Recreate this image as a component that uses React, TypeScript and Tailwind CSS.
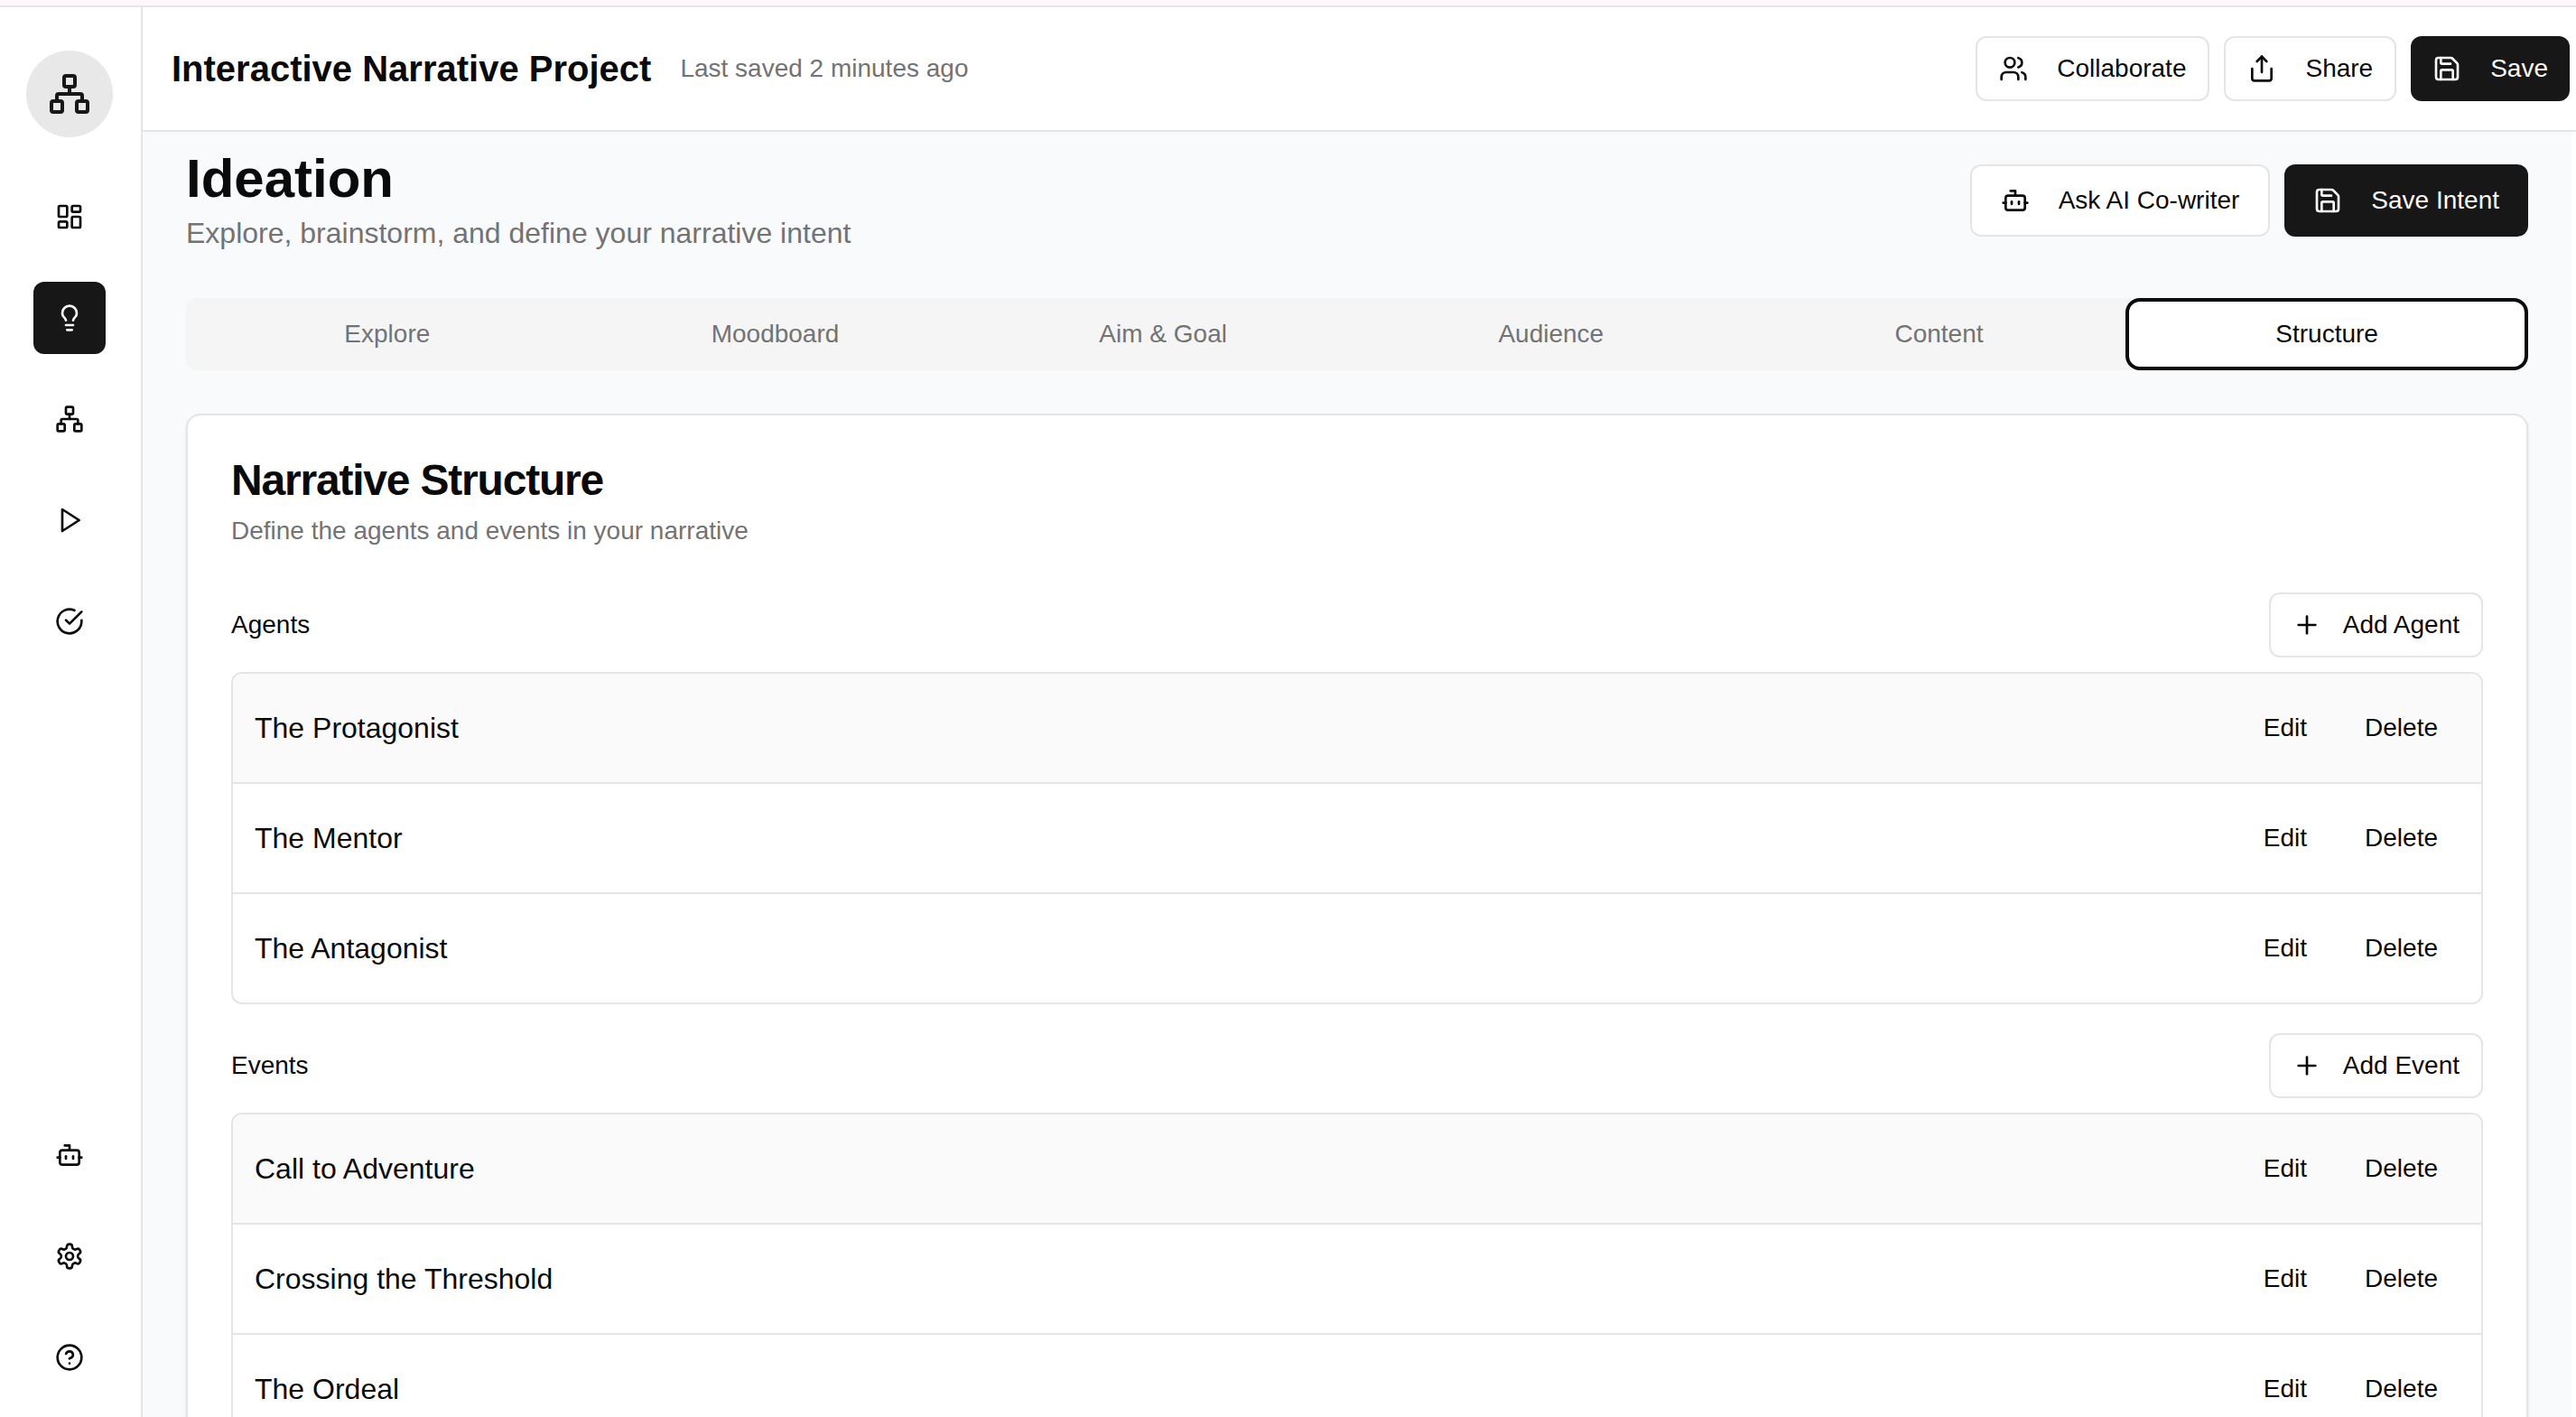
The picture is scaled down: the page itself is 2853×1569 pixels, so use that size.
import { ComponentType, ReactNode, useState } from "react";
import {
  Bot,
  CircleQuestionMark,
  LayoutDashboard,
  Lightbulb,
  Network,
  Plus,
  Save,
  Share,
  Users,
} from "lucide-react";

type IconType = ComponentType<{ className?: string }>;
type NavItem = { label: string; icon: IconType };

function StrokeIcon({ className, children }: { className?: string; children: ReactNode }) {
  return (
    <svg
      viewBox="0 0 24 24"
      fill="none"
      stroke="currentColor"
      strokeWidth="2"
      strokeLinecap="round"
      strokeLinejoin="round"
      aria-hidden="true"
      className={className}
    >
      {children}
    </svg>
  );
}

function PlayIcon({ className }: { className?: string }) {
  return (
    <StrokeIcon className={className}>
      <polygon points="6 3 20 12 6 21 6 3" />
    </StrokeIcon>
  );
}

function CheckIcon({ className }: { className?: string }) {
  return (
    <StrokeIcon className={className}>
      <path d="M22 11.08V12a10 10 0 1 1-5.93-9.14" />
      <path d="m9 11 3 3L22 4" />
    </StrokeIcon>
  );
}

function GearIcon({ className }: { className?: string }) {
  return (
    <StrokeIcon className={className}>
      <path d="M12.22 2h-.44a2 2 0 0 0-2 2v.18a2 2 0 0 1-1 1.73l-.43.25a2 2 0 0 1-2 0l-.15-.08a2 2 0 0 0-2.73.73l-.22.38a2 2 0 0 0 .73 2.73l.15.1a2 2 0 0 1 1 1.72v.51a2 2 0 0 1-1 1.74l-.15.09a2 2 0 0 0-.73 2.73l.22.38a2 2 0 0 0 2.73.73l.15-.08a2 2 0 0 1 2 0l.43.25a2 2 0 0 1 1 1.73V20a2 2 0 0 0 2 2h.44a2 2 0 0 0 2-2v-.18a2 2 0 0 1 1-1.73l.43-.25a2 2 0 0 1 2 0l.15.08a2 2 0 0 0 2.73-.73l.22-.39a2 2 0 0 0-.73-2.73l-.15-.08a2 2 0 0 1-1-1.74v-.5a2 2 0 0 1 1-1.74l.15-.09a2 2 0 0 0 .73-2.73l-.22-.38a2 2 0 0 0-2.73-.73l-.15.08a2 2 0 0 1-2 0l-.43-.25a2 2 0 0 1-1-1.73V4a2 2 0 0 0-2-2z" />
      <circle cx="12" cy="12" r="3" />
    </StrokeIcon>
  );
}

const mainNav: NavItem[] = [
  { label: "Dashboard", icon: LayoutDashboard },
  { label: "Ideation", icon: Lightbulb },
  { label: "Structure map", icon: Network },
  { label: "Play", icon: PlayIcon },
  { label: "Review", icon: CheckIcon },
];

const footerNav: NavItem[] = [
  { label: "AI Co-writer", icon: Bot },
  { label: "Settings", icon: GearIcon },
  { label: "Help", icon: CircleQuestionMark },
];

const tabs = ["Explore", "Moodboard", "Aim & Goal", "Audience", "Content", "Structure"];
const agents = ["The Protagonist", "The Mentor", "The Antagonist"];
const events = ["Call to Adventure", "Crossing the Threshold", "The Ordeal"];

function NavButton({ item, active }: { item: NavItem; active?: boolean }) {
  const Icon = item.icon;
  return (
    <button
      type="button"
      aria-label={item.label}
      className={`flex size-20 items-center justify-center rounded-xl ${
        active ? "bg-[#171717] text-[#fafafa]" : "text-[#0a0a0a]"
      }`}
    >
      <Icon className="size-8" />
    </button>
  );
}

type ActionProps = {
  icon: IconType;
  children: ReactNode;
  primary?: boolean;
  large?: boolean;
  tight?: boolean;
};

function ActionButton({ icon: Icon, children, primary, large, tight }: ActionProps) {
  return (
    <button
      type="button"
      className={`flex items-center rounded-xl text-[28px] leading-10 whitespace-nowrap ${
        large ? "h-20 px-8" : "h-18 px-6"
      } ${tight ? "gap-6" : "gap-8"} ${
        primary ? "bg-[#171717] text-[#fafafa]" : "border-2 border-[#e5e5e5] bg-white"
      }`}
    >
      <Icon className="size-8" />
      {children}
    </button>
  );
}

function ItemSection({ title, action, items }: { title: string; action: string; items: string[] }) {
  return (
    <section className="flex flex-col gap-4">
      <div className="flex items-center justify-between">
        <h3 className="text-[28px] leading-7">{title}</h3>
        <ActionButton icon={Plus} tight>
          {action}
        </ActionButton>
      </div>
      <ul className="divide-y-2 divide-[#e5e5e5] overflow-hidden rounded-xl border-2 border-[#e5e5e5]">
        {items.map((item) => (
          <li
            key={item}
            className="flex items-center justify-between p-6 first:bg-[#fafafa]"
          >
            <span className="text-[32px] leading-12">{item}</span>
            <div className="flex gap-4">
              <button type="button" className="h-18 px-6 text-[28px] leading-10">
                Edit
              </button>
              <button type="button" className="h-18 px-6 text-[28px] leading-10">
                Delete
              </button>
            </div>
          </li>
        ))}
      </ul>
    </section>
  );
}

export default function App() {
  const [tab, setTab] = useState("Structure");

  return (
    <div className="flex h-screen flex-col overflow-hidden bg-white font-['Liberation_Sans',Arial,sans-serif] text-[#0a0a0a]">
      <div className="h-2 shrink-0 border-b-2 border-[#eedfe8] bg-[#fff5fa]" />
      <div className="flex min-h-0 flex-1">
        <aside className="flex w-[158px] shrink-0 flex-col items-center justify-between border-r-2 border-[#e5e5e5] pt-12 pr-0.5 pb-[26px]">
          <div className="flex flex-col items-center gap-12">
            <div className="flex size-24 items-center justify-center rounded-full bg-[#e8e8e8] text-[#171717]">
              <Network className="size-12" />
            </div>
            <nav aria-label="Main" className="flex flex-col gap-8">
              {mainNav.map((item) => (
                <NavButton key={item.label} item={item} active={item.label === "Ideation"} />
              ))}
            </nav>
          </div>
          <nav aria-label="Support" className="flex flex-col gap-8">
            {footerNav.map((item) => (
              <NavButton key={item.label} item={item} />
            ))}
          </nav>
        </aside>

        <div className="flex min-w-0 flex-1 flex-col">
          <header className="flex shrink-0 items-center justify-between border-b-2 border-[#e5e5e5] py-8 pr-[7px] pl-8">
            <div className="flex items-center gap-8">
              <h1 className="text-[40px] leading-14 font-semibold">Interactive Narrative Project</h1>
              <span className="text-[28px] leading-10 text-[#737373]">Last saved 2 minutes ago</span>
            </div>
            <div className="flex items-center gap-4">
              <ActionButton icon={Users}>Collaborate</ActionButton>
              <ActionButton icon={Share}>Share</ActionButton>
              <ActionButton icon={Save} primary>
                Save
              </ActionButton>
            </div>
          </header>

          <main className="mr-[5px] flex min-h-0 flex-1 flex-col gap-12 overflow-hidden bg-[#f9fafc] px-12 pt-4">
            <div className="flex shrink-0 items-center justify-between">
              <div>
                <h2 className="text-[60px] leading-18 font-bold">Ideation</h2>
                <p className="text-[32px] leading-12 text-[#737373]">
                  Explore, brainstorm, and define your narrative intent
                </p>
              </div>
              <div className="flex gap-4">
                <ActionButton icon={Bot} large>
                  Ask AI Co-writer
                </ActionButton>
                <ActionButton icon={Save} large primary>
                  Save Intent
                </ActionButton>
              </div>
            </div>

            <div role="tablist" className="grid shrink-0 grid-cols-6 rounded-xl bg-[#f5f5f5] p-2">
              {tabs.map((name) => (
                <button
                  key={name}
                  type="button"
                  role="tab"
                  aria-selected={name === tab}
                  onClick={() => setTab(name)}
                  className={`rounded-lg py-3 text-[28px] leading-10 ${
                    name === tab
                      ? "bg-white ring-4 ring-[#0a0a0a] ring-offset-4 ring-offset-white"
                      : "text-[#737373]"
                  }`}
                >
                  {name}
                </button>
              ))}
            </div>

            <div className="shrink-0 rounded-2xl border-2 border-[#e5e5e5] bg-white p-12 shadow-sm">
              <h2 className="text-[48px] leading-12 font-semibold tracking-tight">Narrative Structure</h2>
              <p className="mt-3 mb-12 text-[28px] leading-10 text-[#737373]">
                Define the agents and events in your narrative
              </p>
              <div className="flex flex-col gap-8">
                <ItemSection title="Agents" action="Add Agent" items={agents} />
                <ItemSection title="Events" action="Add Event" items={events} />
              </div>
            </div>
          </main>
        </div>
      </div>
    </div>
  );
}
